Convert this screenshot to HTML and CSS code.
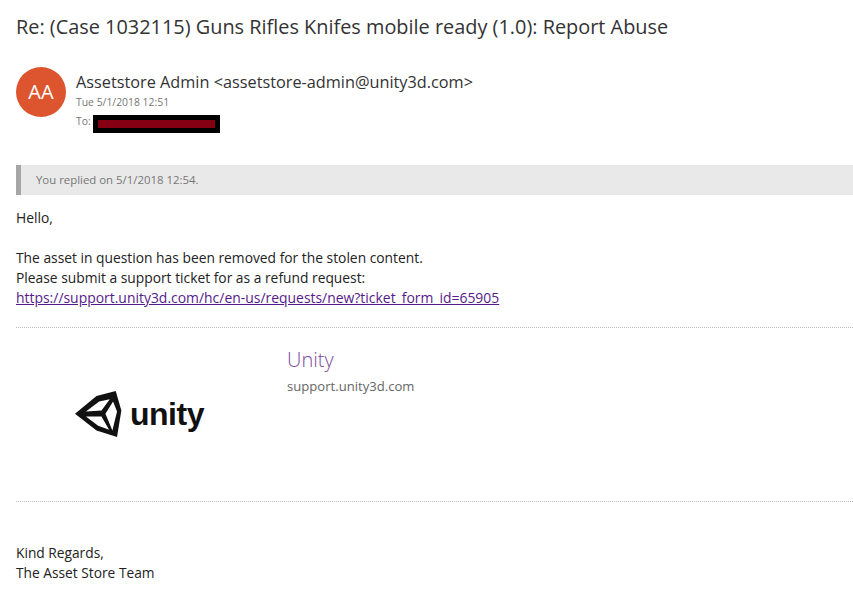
FILE: index.html
```html
<!DOCTYPE html>
<html lang="en">
<head>
<meta charset="UTF-8" />
<title>Report Abuse</title>
<link rel="stylesheet" href="styles.css">
</head>
<body>
<main class="message">
  <h1 class="subject">Re: (Case 1032115) Guns Rifles Knifes mobile ready (1.0): Report Abuse</h1>

  <header class="sender">
    <div class="avatar">AA</div>
    <div class="sender-info">
      <div class="sender-name">Assetstore Admin &lt;assetstore-admin@unity3d.com&gt;</div>
      <div class="sender-date">Tue 5/1/2018 12:51</div>
      <div class="sender-to">To: <span class="redacted"><span class="redacted-fill"></span></span></div>
    </div>
  </header>

  <div class="replied">You replied on 5/1/2018 12:54.</div>

  <section class="body-text">
    <p>Hello,</p>
    <p>The asset in question has been removed for the stolen content.<br>
    Please submit a support ticket for as a refund request:<br>
    <a href="#">https://support.unity3d.com/hc/en-us/requests/new?ticket_form_id=65905</a></p>
  </section>

  <section class="preview">
    <div class="preview-logo">
      <svg class="logo-cube" viewBox="45 150 142 145" width="47" height="48" aria-hidden="true">
        <path class="cube-shape" fill-rule="evenodd" d="M45 222 L110 168 L168 153 L185 212 L172 292 L110 272 Z M78 215 L118 185 L150 178 L125 212 Z M78 230 L125 230 L148 270 L115 258 Z M160 185 L172 215 L158 272 L137 222 Z" />
      </svg>
      <span class="logo-word">unity</span>
    </div>
    <div class="preview-text">
      <div class="preview-title">Unity</div>
      <div class="preview-url">support.unity3d.com</div>
    </div>
  </section>

  <section class="signature">
    <p>Kind Regards,<br>The Asset Store Team</p>
  </section>
</main>
</body>
</html>
```

FILE: styles.css
```css
* {
  box-sizing: border-box;
}
body {
  margin: 0;
  background: #fff;
  color: #222;
  font-family: "Open Sans", "Noto Sans", sans-serif;
  font-size: 13.82px;
  line-height: 20px;
}
.message {
  padding: 13px 0 0 16px;
}
.subject {
  margin: 0;
  font-size: 19.9px;
  font-weight: 400;
  line-height: 28px;
  color: #333;
}
.sender {
  display: flex;
  gap: 10px;
  margin-top: 26px;
}
.avatar {
  flex: none;
  width: 50px;
  height: 50px;
  border-radius: 50%;
  background: #dc552e;
  color: #fff;
  font-size: 20px;
  display: flex;
  align-items: center;
  justify-content: center;
}
.sender-info {
  margin-top: 4px;
}
.sender-name {
  font-size: 16.28px;
  line-height: 22px;
  color: #333;
}
.sender-date,
.sender-to {
  font-size: 10.4px;
  line-height: 16px;
  color: #777;
}
.sender-date {
  margin-top: 1px;
}
.sender-to {
  display: flex;
  align-items: flex-start;
  gap: 2px;
  margin-top: 3px;
}
.redacted {
  display: block;
  width: 127px;
  height: 18px;
  margin-top: 2px;
  border: 5px solid #000;
  background: #000;
}
.redacted-fill {
  display: block;
  height: 8px;
  background: #850012;
}
.replied {
  margin-top: 32px;
  height: 30px;
  padding-left: 15px;
  border-left: 5px solid #a6a6a6;
  background: #e9e9e9;
  color: #777;
  font-size: 11.4px;
  line-height: 30px;
}
.body-text {
  margin-top: 13px;
}
.body-text p {
  margin: 0 0 20px;
}
.body-text a {
  color: #551a8b;
  font-size: 13.93px;
}
.preview {
  display: flex;
  height: 175px;
  margin-top: -1px;
  border-top: 1px dotted #bbb;
  border-bottom: 1px dotted #bbb;
}
.preview-logo {
  width: 271px;
  padding: 62px 0 0 59px;
  display: flex;
  align-items: flex-start;
  gap: 8px;
}
.logo-cube {
  flex: none;
}
.cube-shape {
  fill: #111;
}
.logo-word {
  margin-top: 2px;
  font-family: "Liberation Sans", sans-serif;
  font-weight: 700;
  font-size: 32px;
  line-height: 44px;
  color: #111;
  letter-spacing: -0.5px;
}
.preview-text {
  padding-top: 18px;
}
.preview-title {
  font-size: 20px;
  font-weight: 300;
  line-height: 28px;
  color: #7b4b9c;
}
.preview-url {
  margin-top: 2px;
  font-size: 13.1px;
  line-height: 20px;
  color: #666;
}
.signature {
  margin-top: 41px;
}
.signature p {
  margin: 0;
  font-size: 13.75px;
}
```
